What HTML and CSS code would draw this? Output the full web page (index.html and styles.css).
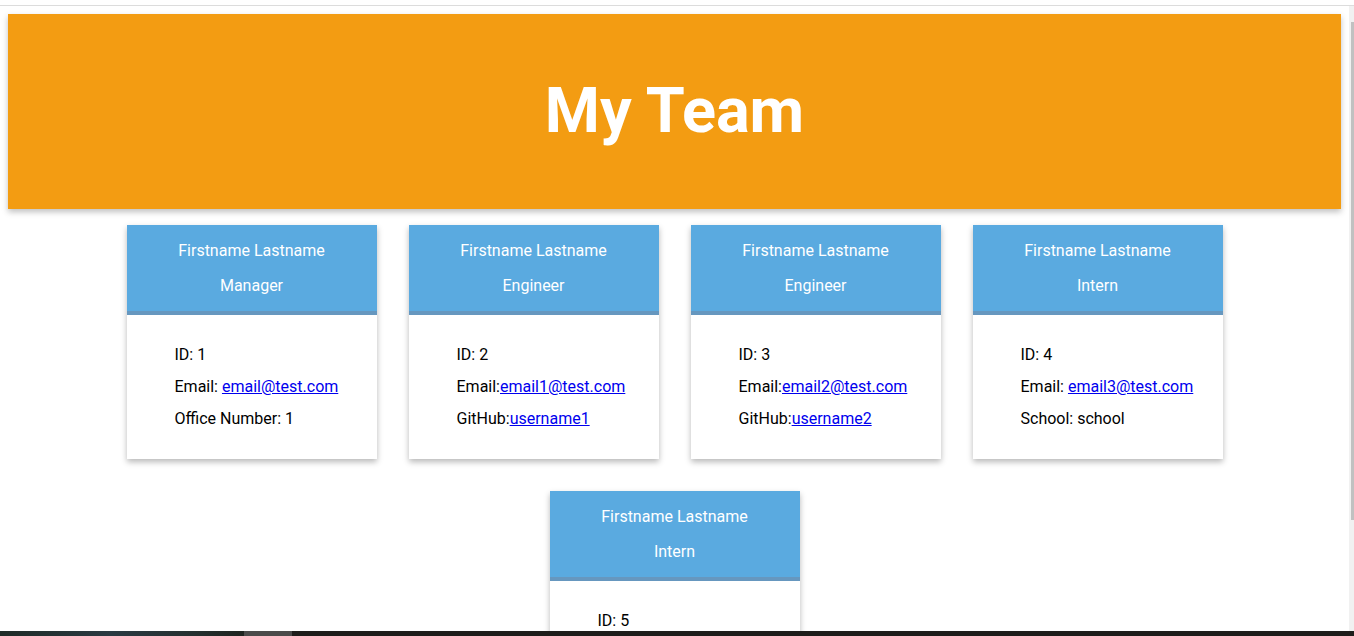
FILE: index.html
```html
<!DOCTYPE html>
<html lang="en">
<head>
<meta charset="utf-8">
<title>My Team</title>
<link rel="stylesheet" href="styles.css">
</head>
<body>
<div class="screen">
  <div class="topline"></div>
  <div class="main">
    <div class="viewport">
      <header class="jumbo"><h1>My Team</h1></header>
      <section class="cards">
        <article class="card">
          <div class="card-head"><div>Firstname Lastname</div><div>Manager</div></div>
          <ul class="card-body">
            <li>ID: 1</li>
            <li>Email: <a href="#">email@test.com</a></li>
            <li>Office Number: 1</li>
          </ul>
        </article>
        <article class="card">
          <div class="card-head"><div>Firstname Lastname</div><div>Engineer</div></div>
          <ul class="card-body">
            <li>ID: 2</li>
            <li>Email:<a href="#">email1@test.com</a></li>
            <li>GitHub:<a href="#">username1</a></li>
          </ul>
        </article>
        <article class="card">
          <div class="card-head"><div>Firstname Lastname</div><div>Engineer</div></div>
          <ul class="card-body">
            <li>ID: 3</li>
            <li>Email:<a href="#">email2@test.com</a></li>
            <li>GitHub:<a href="#">username2</a></li>
          </ul>
        </article>
        <article class="card">
          <div class="card-head"><div>Firstname Lastname</div><div>Intern</div></div>
          <ul class="card-body">
            <li>ID: 4</li>
            <li>Email: <a href="#">email3@test.com</a></li>
            <li>School: school</li>
          </ul>
        </article>
        <article class="card">
          <div class="card-head"><div>Firstname Lastname</div><div>Intern</div></div>
          <ul class="card-body">
            <li>ID: 5</li>
          </ul>
        </article>
      </section>
    </div>
    <div class="scrollbar"><div class="thumb"></div></div>
  </div>
  <div class="taskbar">
    <div class="tb-left"></div>
    <div class="tb-active"></div>
    <div class="tb-rest"></div>
  </div>
</div>
</body>
</html>
```

FILE: styles.css
```css
html, body {
  margin: 0;
  padding: 0;
  background: #ffffff;
}

.screen {
  width: 1354px;
  height: 636px;
  display: flex;
  flex-direction: column;
  overflow: hidden;
  font-family: Roboto, "Liberation Sans", sans-serif;
}

.topline {
  height: 5px;
  border-bottom: 1px solid #dcdcdc;
  flex: none;
}

.main {
  flex: 1;
  display: flex;
  min-height: 0;
}

.viewport {
  flex: 1;
  padding: 8px;
  overflow: hidden;
}

.jumbo {
  height: 195px;
  background: #f39c12;
  display: flex;
  align-items: center;
  justify-content: center;
  box-shadow: 0 3px 6px rgba(0, 0, 0, 0.25);
}

.jumbo h1 {
  margin: 0;
  color: #ffffff;
  font-size: 63px;
  font-weight: 700;
  line-height: 1;
  position: relative;
  top: -1px;
}

.cards {
  display: flex;
  flex-wrap: wrap;
  justify-content: center;
}

.card {
  width: 250px;
  margin: 16px;
  background: #ffffff;
  box-shadow: 0 3px 6px rgba(0, 0, 0, 0.28);
}

.card-head {
  background: #5aaae0;
  border-bottom: 4px solid #6697bf;
  color: #ffffff;
  text-align: center;
  font-size: 16px;
  line-height: 35px;
  padding: 8px 0 8px;
}

.card-body {
  list-style: none;
  margin: 0;
  padding: 24px 0 24px 48px;
  font-size: 16px;
  line-height: 32px;
  color: #000000;
}

.card-body a {
  color: #0000ee;
  text-decoration: underline;
}

.scrollbar {
  width: 5px;
  flex: none;
  background: #f1f1f1;
  position: relative;
}

.thumb {
  position: absolute;
  left: 2px;
  right: 0;
  top: 16px;
  height: 498px;
  background: #c1c1c1;
}

.taskbar {
  height: 5px;
  flex: none;
  display: flex;
}

.tb-left {
  width: 244px;
  background: linear-gradient(90deg, #1f2b27 0%, #2a3a42 45%, #253030 80%, #1e2420 100%);
}

.tb-active {
  width: 48px;
  background: #4b4b4b;
}

.tb-rest {
  flex: 1;
  background: #1e1d1b;
}
```
